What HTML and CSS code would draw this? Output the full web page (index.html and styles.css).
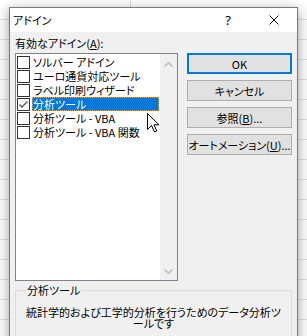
FILE: index.html
```html
<!DOCTYPE html>
<html>
<head lang="ja">
    <meta charset="UTF-8">
    <title>アドイン</title>
    <link rel="stylesheet" href="styles.css">
</head>
<body>
<div class="dialog">
    <div class="titlebar">
        <span class="title">アドイン</span>
        <span class="help">?</span>
        <span class="close">
            <svg width="10" height="10" viewBox="0 0 10 10"><path d="M0.5 0.5 L9.5 9.5 M9.5 0.5 L0.5 9.5" stroke="#000" stroke-width="1"/></svg>
        </span>
    </div>
    <div class="client">
        <div class="main">
            <div class="label">有効なアドイン(<u>A</u>):</div>
            <div class="listbox">
                <ul class="items">
                    <li><span class="check"></span><span class="name">ソルバー アドイン</span></li>
                    <li><span class="check"></span><span class="name">ユーロ通貨対応ツール</span></li>
                    <li><span class="check"></span><span class="name">ラベル印刷ウィザード</span></li>
                    <li class="selected"><span class="check checked"><svg width="11" height="11" viewBox="0 0 11 11"><path d="M1.5 5.5 L4 8 L9.5 2.5" fill="none" stroke="#555" stroke-width="1.4"/></svg></span><span class="name">分析ツール</span></li>
                    <li><span class="check"></span><span class="name">分析ツール - VBA</span></li>
                    <li><span class="check"></span><span class="name">分析ツール - VBA 関数</span></li>
                </ul>
                <div class="scroll">
                    <svg width="9" height="5" viewBox="0 0 9 5"><path d="M0.5 4.5 L4.5 0.8 L8.5 4.5" fill="none" stroke="#c2c2c2" stroke-width="1.6"/></svg>
                    <svg width="9" height="5" viewBox="0 0 9 5"><path d="M0.5 0.5 L4.5 4.2 L8.5 0.5" fill="none" stroke="#c2c2c2" stroke-width="1.6"/></svg>
                </div>
            </div>
            <div class="buttons">
                <button class="default">OK</button>
                <button>キャンセル</button>
                <button>参照(<u>B</u>)...</button>
                <button>オートメーション(<u>U</u>)...</button>
            </div>
        </div>
        <fieldset class="group">
            <legend>分析ツール</legend>
            <p>統計学的および工学的分析を行うためのデータ分析ツールです</p>
        </fieldset>
    </div>
    <svg class="cursor" width="13" height="20" viewBox="0 0 13 20"><path d="M0.5 0.5 L0.5 16.5 L4.5 12.5 L7.5 19 L9.8 18 L7 11.8 L12 11.8 Z" fill="#fff" stroke="#000" stroke-width="1"/></svg>
</div>
</body>
</html>
```

FILE: styles.css
```css
*{
    margin: 0;
    padding: 0;
    box-sizing: border-box;
}
ul{
    list-style: none;
}
body{
    width: 307px;
    height: 336px;
    overflow: hidden;
    background-color: #fff;
    background-image:
        linear-gradient(to right, transparent 130px, #dadada 130px, #dadada 131px, transparent 131px),
        repeating-linear-gradient(to bottom, transparent 0, transparent 19px, #e2e2e2 19px, #e2e2e2 20px);
    font-family: "Noto Sans CJK JP", sans-serif;
    font-size: 11px;
    font-feature-settings: "palt";
    color: #000;
}
.dialog{
    position: relative;
    width: 289px;
    height: 340px;
    margin: 7px 0 0 9px;
    border: 1px solid #7a7a7a;
    background: #f0f0f0;
    box-shadow: 0 3px 12px rgba(0, 0, 0, 0.4);
}
.titlebar{
    display: flex;
    align-items: center;
    height: 24px;
    background: #fff;
}
.title{
    padding-left: 3px;
    line-height: 24px;
}
.help{
    margin-left: auto;
    width: 46px;
    text-align: center;
    font-size: 13px;
    font-family: "Noto Sans", sans-serif;
    line-height: 24px;
}
.close{
    display: flex;
    align-items: center;
    justify-content: center;
    width: 46px;
    height: 24px;
}
.client{
    padding: 3px 5px 0 5px;
}
.main{
    display: grid;
    grid-template-columns: 163px 105px;
    column-gap: 9px;
}
.label{
    grid-column: 1;
    line-height: 16px;
    margin-bottom: 2px;
}
.listbox{
    grid-column: 1;
    grid-row: 2;
    display: flex;
    height: 228px;
    border: 1px solid #828190;
    background: #fff;
}
.items{
    flex: 1;
    padding-top: 1px;
}
.items li{
    display: flex;
    align-items: center;
    height: 14px;
    padding-left: 1px;
}
.check{
    display: flex;
    align-items: center;
    justify-content: center;
    width: 13px;
    height: 13px;
    border: 1px solid #333;
    background: #fff;
}
.name{
    flex: 1;
    margin-left: 2px;
    margin-right: 1px;
    padding-left: 1px;
    line-height: 14px;
    white-space: nowrap;
}
.selected .name{
    background: #0078d7;
    color: #fff;
    outline: 1px dotted #f3a64a;
    outline-offset: -1px;
}
.scroll{
    display: flex;
    flex-direction: column;
    justify-content: space-between;
    align-items: center;
    width: 17px;
    padding: 8px 0 6px;
    background: #f0f0f0;
}
.scroll svg{
    display: block;
}
.buttons{
    grid-column: 2;
    grid-row: 2;
    display: flex;
    flex-direction: column;
    gap: 6px;
}
.buttons button{
    height: 21px;
    padding: 0;
    border: 1px solid #adadad;
    background: #e1e1e1;
    font-family: "Noto Sans CJK JP", sans-serif;
    font-size: 11px;
    font-feature-settings: "palt";
    color: #000;
    line-height: 18px;
    white-space: nowrap;
}
.buttons button.default{
    border: 2px solid #0078d7;
}
.group{
    margin-top: 2px;
    height: 60px;
    border: 1px solid #dcdcdc;
    padding: 0 6px;
}
.group legend{
    margin-left: 4px;
    padding: 0 1px;
    line-height: 14px;
}
.group p{
    margin-top: 10px;
    text-align: center;
    line-height: 11px;
}
.cursor{
    position: absolute;
    left: 137px;
    top: 105px;
}
```
